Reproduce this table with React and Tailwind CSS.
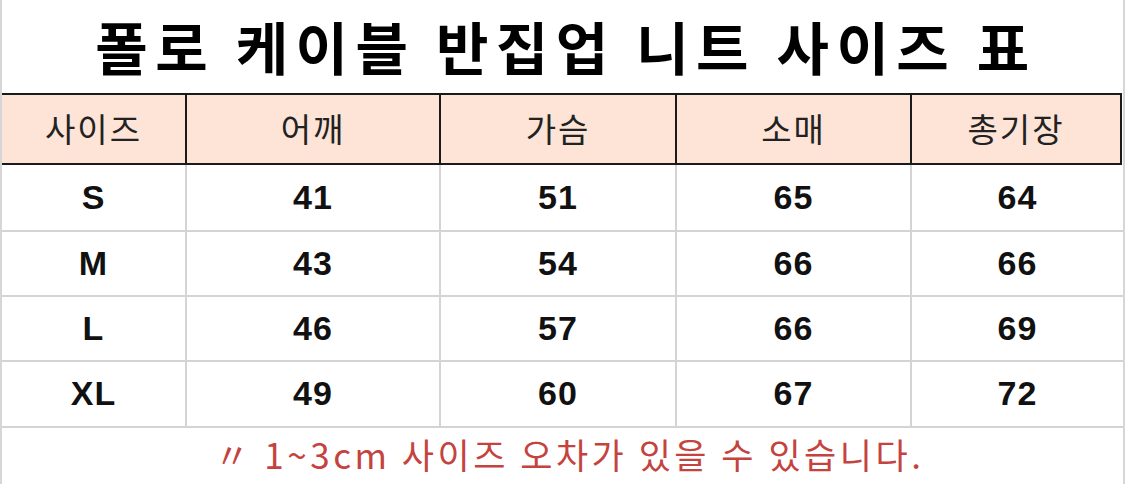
import React from "react";

const rows = [
  ["S", "41", "51", "65", "64", "h-[67px]"],
  ["M", "43", "54", "66", "66", "h-[65px]"],
  ["L", "46", "57", "66", "69", "h-[65px]"],
  ["XL", "49", "60", "67", "72", "h-[66px]"],
];

const widths = ["w-[185px]", "w-[254px]", "w-[236px]", "w-[235px]", "flex-1"];

export default function App() {
  return (
    <div
      className="w-[1125px] h-[484px] bg-white border-l-2 border-r-2 border-[#d6d6d6] flex flex-col overflow-hidden"
      style={{ fontFamily: '"Noto Sans CJK KR", "Noto Sans", sans-serif' }}
    >
      <div className="h-[93px] flex items-center justify-center">
        <span className="text-[57px] font-bold text-black tracking-[7.5px] leading-none pb-[2px] pl-[7px]">
          폴로 케이블 반집업 니트 사이즈 표
        </span>
      </div>
      <div className="h-[72px] flex bg-[#fde4d7] border-t-2 border-b-2 border-[#1a1a1a] border-r-2 mr-[1px]">
        {["사이즈", "어깨", "가슴", "소매", "총기장"].map((t, i) => (
          <div
            key={t}
            className={`${widths[i]} flex items-center justify-center text-[33px] text-[#222] tracking-[2px] ${i < 4 ? "border-r-2 border-[#1a1a1a]" : ""}`}
          >
            {t}
          </div>
        ))}
      </div>
      {rows.map((r) => (
        <div key={r[0]} className={`${r[5]} flex border-b-2 border-[#d4d4d4]`}>
          {r.slice(0, 5).map((v, i) => (
            <div
              key={i}
              className={`${widths[i]} flex items-center justify-center text-[34px] font-bold text-[#111] tracking-[1px] ${i < 4 ? "border-r-2 border-[#d4d4d4]" : ""}`}
              style={{ fontFamily: '"Liberation Sans", Arial, sans-serif' }}
            >
              {v}
            </div>
          ))}
        </div>
      ))}
      <div className="flex-1 flex items-center justify-center pb-[4px] pl-[14px]">
        <span className="text-[35px] text-[#c5433f] tracking-[3.5px]">
          〃 1~3cm 사이즈 오차가 있을 수 있습니다.
        </span>
      </div>
    </div>
  );
}
